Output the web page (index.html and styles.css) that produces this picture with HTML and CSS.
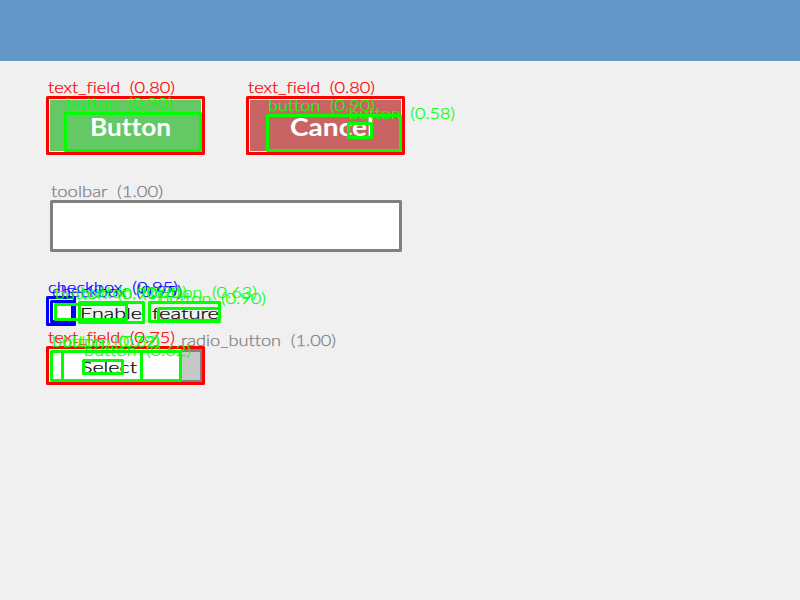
FILE: index.html
```
<!DOCTYPE html>
<html lang="en">
<head>
<meta charset="utf-8">
<title>Element detection</title>
<link rel="stylesheet" href="styles.css">
</head>
<body>
<header class="topbar"></header>
<main class="form">
  <div class="actions">
    <div class="btn ok"></div>
    <div class="btn cancel"></div>
  </div>
  <div class="input"></div>
  <div class="check"><span class="box"></span></div>
  <div class="select"><span class="value"></span><span class="arrow"></span></div>
</main>
<svg class="overlay" width="800" height="600" viewBox="0 0 800 600">
  <g class="caption">
    <text x="90" y="136" textLength="81" lengthAdjust="spacingAndGlyphs">Button</text>
    <text x="290" y="136" textLength="84" lengthAdjust="spacingAndGlyphs">Cancel</text>
  </g>
  <g class="dark">
    <text x="80" y="319" textLength="62" lengthAdjust="spacingAndGlyphs">Enable</text>
    <text x="152" y="319" textLength="67" lengthAdjust="spacingAndGlyphs">feature</text>
    <text x="81" y="373" textLength="56" lengthAdjust="spacingAndGlyphs">Select</text>
  </g>
  <g class="gray">
    <rect x="51.5" y="201.5" width="349" height="49"/>
    <text x="51" y="197" textLength="112" lengthAdjust="spacingAndGlyphs">toolbar (1.00)</text>
    <path d="M181 350.5H201.5V381.5H181"/>
    <text x="181" y="346" textLength="155" lengthAdjust="spacingAndGlyphs">radio_button (1.00)</text>
  </g>
  <g class="blue">
    <rect x="47.5" y="297.5" width="27" height="27"/>
    <rect x="51.5" y="301.5" width="21" height="20"/>
    <text x="48" y="293" textLength="130" lengthAdjust="spacingAndGlyphs">checkbox (0.95)</text>
    <text x="52" y="297" textLength="130" lengthAdjust="spacingAndGlyphs">checkbox (0.95)</text>
  </g>
  <g class="red">
    <rect x="47.5" y="97.5" width="156" height="56"/>
    <text x="48" y="93" textLength="127" lengthAdjust="spacingAndGlyphs">text_field (0.80)</text>
    <rect x="247.5" y="97.5" width="156" height="56"/>
    <text x="248" y="93" textLength="127" lengthAdjust="spacingAndGlyphs">text_field (0.80)</text>
    <rect x="47.5" y="347.5" width="156" height="36"/>
    <text x="48" y="343" textLength="127" lengthAdjust="spacingAndGlyphs">text_field (0.75)</text>
  </g>
  <g class="green">
    <rect x="65.5" y="113.5" width="135" height="37"/>
    <text x="66" y="109" textLength="107" lengthAdjust="spacingAndGlyphs">button (0.90)</text>
    <rect x="267.5" y="115.5" width="133" height="35"/>
    <text x="268" y="111" textLength="107" lengthAdjust="spacingAndGlyphs">button (0.90)</text>
    <rect x="348.5" y="123.5" width="23" height="14"/>
    <text x="349" y="119" textLength="106" lengthAdjust="spacingAndGlyphs">button (0.58)</text>
    <rect x="55.5" y="304.5" width="71" height="15"/>
    <text x="55" y="299" textLength="107" lengthAdjust="spacingAndGlyphs">button (0.90)</text>
    <rect x="79.5" y="302.5" width="64" height="20"/>
    <text x="80" y="298" textLength="107" lengthAdjust="spacingAndGlyphs">button (0.90)</text>
    <rect x="149.5" y="302.5" width="70" height="19"/>
    <text x="150" y="298" textLength="107" lengthAdjust="spacingAndGlyphs">button (0.63)</text>
    <rect x="158.5" y="308.5" width="61" height="12"/>
    <text x="159" y="304" textLength="107" lengthAdjust="spacingAndGlyphs">button (0.90)</text>
    <rect x="51.5" y="351.5" width="90" height="29"/>
    <text x="52" y="347" textLength="107" lengthAdjust="spacingAndGlyphs">button (0.79)</text>
    <rect x="62.5" y="351.5" width="118" height="29"/>
    <text x="63" y="347" textLength="97" lengthAdjust="spacingAndGlyphs">button (0.62)</text>
    <rect x="83.5" y="360.5" width="39" height="13"/>
    <text x="84" y="356" textLength="107" lengthAdjust="spacingAndGlyphs">button (0.62)</text>
  </g>
</svg>
</body>
</html>
```
FILE: styles.css
```
body { margin: 0; width: 800px; height: 600px; background: #f0f0f0; overflow: hidden; }
.topbar { height: 61px; background: #6496c8; }
.form { padding: 39px 50px 0; display: flex; flex-direction: column; }
.actions { display: flex; gap: 49px; margin-bottom: 49px; }
.btn { width: 151px; height: 51px; }
.ok { background: #64c864; }
.cancel { background: #c86464; }
.input { width: 351px; height: 51px; background: #fff; margin-bottom: 49px; }
.check { height: 21px; margin-bottom: 29px; }
.box { display: block; width: 21px; height: 21px; background: #fff; }
.select { display: flex; width: 151px; height: 31px; }
.value { flex: 1; background: #fff; }
.arrow { width: 21px; background: #c8c8c8; }
.overlay { position: absolute; left: 0; top: 0; font-family: Lato, "Open Sans", sans-serif; font-size: 15.5px; font-weight: 300; font-variant-ligatures: none; word-spacing: 4px; }
.overlay rect, .overlay path { fill: none; stroke-width: 3; stroke-linejoin: round; }
.overlay text { stroke: currentColor; stroke-width: 0.25px; }
.overlay .caption text { stroke: none; }
.caption { fill: #fff; font-size: 25px; font-weight: 700; }
.dark { fill: #000; color: #000; font-size: 16.5px; }
.gray { fill: #808080; stroke: #808080; color: #808080; }
.blue { fill: #00f; stroke: #00f; color: #00f; }
.red { fill: #f00; stroke: #f00; color: #f00; }
.green { fill: #0f0; stroke: #0f0; color: #0f0; }
```
